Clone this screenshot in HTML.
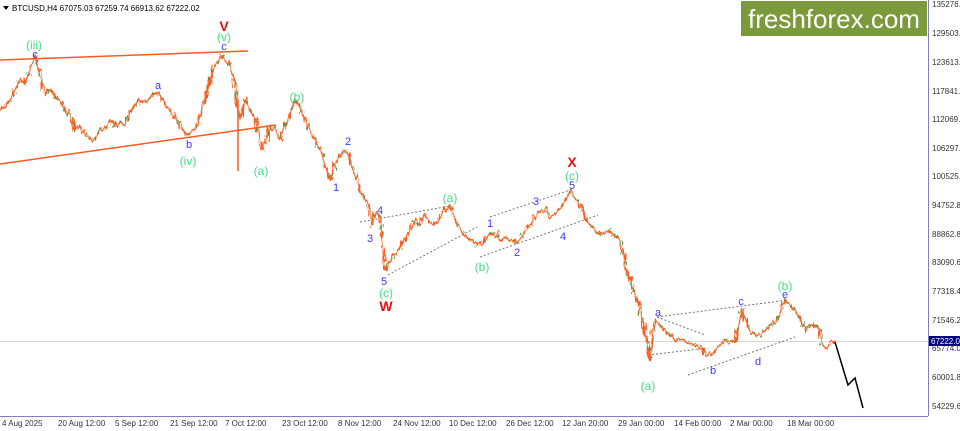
<!DOCTYPE html>
<html><head><meta charset="utf-8"><style>
html,body{margin:0;padding:0;background:#fff;width:960px;height:431px;overflow:hidden}
svg{display:block}
text{font-family:"Liberation Sans",sans-serif}
</style></head><body>
<svg width="960" height="431" viewBox="0 0 960 431" xmlns="http://www.w3.org/2000/svg">
<defs>
<filter id="jit" x="-5%" y="-5%" width="110%" height="110%">
<feTurbulence type="fractalNoise" baseFrequency="0.35 0.08" numOctaves="2" seed="3" result="n"/>
<feDisplacementMap in="SourceGraphic" in2="n" scale="9" xChannelSelector="R" yChannelSelector="G"/>
</filter>
<filter id="jit2" x="-5%" y="-5%" width="110%" height="110%">
<feTurbulence type="fractalNoise" baseFrequency="0.5 0.1" numOctaves="2" seed="8" result="n"/>
<feDisplacementMap in="SourceGraphic" in2="n" scale="10" xChannelSelector="R" yChannelSelector="G"/>
</filter>
<polyline id="p" fill="none" stroke-linejoin="round" points="0,110 5,104 10,100 15,90 20,80 25,84 30,70 35,55 40,75 45,95 50,90 55,98 60,100 65,110 70,115 75,130 80,125 85,135 90,138 95,140 100,130 105,128 110,120 115,126 120,122 125,125 130,112 135,105 140,100 145,102 150,98 158,92 163,100 170,110 175,118 180,125 185,135 190,133 195,130 200,115 205,100 210,80 215,65 220,58 222,55 226,62 230,65 234,80 237,100 240,120 245,100 250,110 255,120 259,135 262,150 266,140 270,125 275,130 280,140 285,125 290,115 295,100 300,108 305,120 310,130 315,140 320,150 325,165 330,180 335,165 340,155 345,150 350,160 355,175 360,190 365,200 370,215 372,225 376,212 380,215 383,250 385,270 390,262 395,255 400,248 405,240 410,230 415,220 420,225 425,215 430,222 435,225 440,215 445,210 450,205 455,220 460,230 465,236 470,240 475,245 480,245 485,238 490,235 495,232 500,240 505,238 510,240 515,242 520,240 525,232 530,225 535,218 540,212 545,210 550,216 555,215 560,208 565,200 570,190 575,198 580,205 585,215 590,225 595,230 600,235 605,232 610,230 615,236 620,240 625,265 630,280 635,295 640,310 645,330 650,360 652,340 655,320 660,325 665,330 670,335 675,340 680,340 685,342 690,345 695,345 700,348 705,352 710,355 715,350 720,345 725,340 730,342 735,340 740,318 742,310 746,322 750,330 755,335 760,335 765,330 770,325 775,322 780,315 785,300 790,305 795,310 800,320 805,330 810,325 815,325 820,330 822,345 826,348 830,345 835,340"/>
</defs>
<rect width="960" height="431" fill="#fff"/>
<line x1="928.5" y1="0" x2="928.5" y2="416" stroke="#8080c0" stroke-width="1"/>
<line x1="0" y1="416.5" x2="928" y2="416.5" stroke="#8080c0" stroke-width="1"/>
<line x1="0" y1="341.5" x2="928" y2="341.5" stroke="#d8d8d8" stroke-width="1"/>
<rect x="741" y="1" width="186" height="35" fill="#7b9a3b"/>
<text x="834" y="28" font-size="26" fill="#fff" text-anchor="middle">freshforex.com</text>
<g stroke="#ff5a1e" stroke-width="1.5" fill="none">
<line x1="0" y1="60" x2="248" y2="51"/>
<line x1="0" y1="164" x2="276" y2="125"/>
<line x1="238" y1="100" x2="238" y2="171"/>
</g>
<g stroke="#777" stroke-width="1" stroke-dasharray="2,2" fill="none">
<line x1="360" y1="222" x2="450" y2="206"/>
<line x1="388" y1="275" x2="477" y2="227"/>
<line x1="490" y1="217" x2="570" y2="190"/>
<line x1="480" y1="257" x2="598" y2="215"/>
<line x1="657" y1="317" x2="788" y2="300"/>
<line x1="657" y1="317" x2="705" y2="335"/>
<line x1="648" y1="355" x2="708" y2="348"/>
<line x1="688" y1="375" x2="795" y2="337"/>
</g>
<g filter="url(#jit)"><use href="#p" stroke="#ff5a1e" stroke-width="1.8"/></g>
<g filter="url(#jit2)"><use href="#p" stroke="#3a9a3a" stroke-width="1.1" stroke-dasharray="4,6"/></g>
<use href="#p" stroke="#ff7a40" stroke-width="0.8" opacity="0.6"/>
<polyline fill="none" stroke="#000" stroke-width="1.5" points="835,342 848,385 855,378 863,408"/>
<g font-size="11" text-anchor="middle">
<g fill="#3a3aff">
<text x="35" y="58">c</text><text x="158" y="89">a</text><text x="189" y="148">b</text><text x="224" y="50">c</text>
<text x="336" y="191">1</text><text x="348" y="145">2</text><text x="370" y="242">3</text><text x="380" y="214">4</text><text x="384" y="285">5</text>
<text x="490" y="227">1</text><text x="517" y="256">2</text><text x="536" y="205">3</text><text x="563" y="240">4</text><text x="572" y="189">5</text>
<text x="658" y="316">a</text><text x="713" y="374">b</text><text x="741" y="305">c</text><text x="758" y="365">d</text><text x="785" y="298">e</text>
</g>
<g fill="#44dd88" font-size="12">
<text x="34" y="49">(iii)</text><text x="224" y="41">(v)</text><text x="188" y="165">(iv)</text><text x="261" y="175">(a)</text><text x="297" y="101">(b)</text>
<text x="386" y="297">(c)</text><text x="450" y="202">(a)</text><text x="482" y="271">(b)</text><text x="572" y="180">(c)</text>
<text x="648" y="390">(a)</text><text x="785" y="290">(b)</text>
</g>
<g fill="#e01010" font-size="14" font-weight="bold">
<text x="224" y="31">V</text><text x="386" y="311">W</text><text x="572" y="167">X</text>
</g>
</g>
<path d="M3,6 L9,6 L6,10 Z" fill="#000"/>
<text x="12" y="11" font-size="8" fill="#000">BTCUSD,H4  67075.03 67259.74 66913.62 67222.02</text>
<g font-size="8" fill="#333">
<text x="932" y="7">135276.0</text><text x="932" y="36">129503.6</text><text x="932" y="65">123613.8</text>
<text x="932" y="94">117841.6</text><text x="932" y="122">112069.4</text><text x="932" y="151">106297.2</text>
<text x="932" y="179">100525.0</text><text x="932" y="208">94752.80</text><text x="932" y="237">88862.80</text>
<text x="932" y="265">83090.60</text><text x="932" y="294">77318.40</text><text x="932" y="323">71546.20</text>
<text x="932" y="351">65774.00</text><text x="932" y="380">60001.80</text><text x="932" y="409">54229.60</text>
</g>
<rect x="929" y="336" width="31" height="10" fill="#000080"/>
<text x="931" y="344" font-size="8" fill="#fff">67222.02</text>
<g font-size="8" fill="#333">
<text x="2" y="426">4 Aug 2025</text><text x="58" y="426">20 Aug 12:00</text><text x="115" y="426">5 Sep 12:00</text>
<text x="170" y="426">21 Sep 12:00</text><text x="225" y="426">7 Oct 12:00</text><text x="282" y="426">23 Oct 12:00</text>
<text x="338" y="426">8 Nov 12:00</text><text x="393" y="426">24 Nov 12:00</text><text x="449" y="426">10 Dec 12:00</text>
<text x="506" y="426">26 Dec 12:00</text><text x="562" y="426">12 Jan 20:00</text><text x="618" y="426">29 Jan 00:00</text>
<text x="674" y="426">14 Feb 00:00</text><text x="730" y="426">2 Mar 00:00</text><text x="787" y="426">18 Mar 00:00</text>
</g>
</svg>
</body></html>
